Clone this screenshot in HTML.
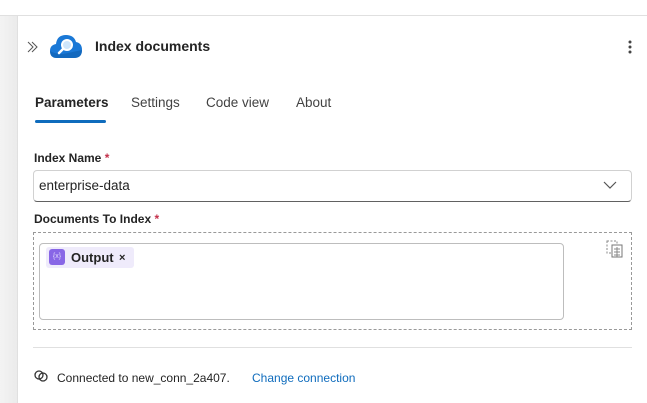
<!DOCTYPE html>
<html><head><style>
*{box-sizing:border-box;margin:0;padding:0}
body{width:647px;height:403px;overflow:hidden;background:#fff;font-family:"Liberation Sans",sans-serif;color:#242424;position:relative}
.strip{position:absolute;left:0;top:16px;width:18px;height:387px;background:linear-gradient(90deg,#f3f3f3,#ebebeb);border-right:1px solid #e0e0e0}
.topline{position:absolute;left:0;top:15px;width:647px;height:1px;background:#e0e0e0}
.abs{position:absolute}
.t{font-size:13.5px}
.req{color:#c4314b}
</style></head><body>
<div class="topline"></div>
<div class="strip"></div>
<svg class="abs" style="left:27px;top:41px" width="12" height="12"><path d="M1 1 L6 6 L1 11 M5 1 L10 6 L5 11" fill="none" stroke="#555" stroke-width="1"/></svg>
<svg class="abs" style="left:49px;top:32px" width="34" height="28" viewBox="0 0 34 28">
<path d="M8 26 Q1 26 1 19 Q1 13 7 12 Q8 3 17 3 Q25 3 27 10 Q33 11 33 18 Q33 26 25 26 Z" fill="#1a78d6"/>
<path d="M8 26 Q1 26 1 19 Q6 22 14 22 L33 18 Q33 26 25 26Z" fill="#0f5fae" opacity=".6"/>
<circle cx="18" cy="13" r="5" fill="#cfe6fb" stroke="#fff" stroke-width="2"/>
<line x1="14" y1="17" x2="10" y2="21" stroke="#fff" stroke-width="2.5" stroke-linecap="round"/>
</svg>
<div class="abs" style="left:95px;top:38px;font-size:14px;font-weight:bold">Index documents</div>
<svg class="abs" style="left:627px;top:40px" width="6" height="16"><circle cx="3" cy="2" r="1.5" fill="#444"/><circle cx="3" cy="7" r="1.5" fill="#444"/><circle cx="3" cy="12" r="1.5" fill="#444"/></svg>
<div class="abs t" style="left:35px;top:95px;font-weight:bold">Parameters</div>
<div class="abs" style="left:35px;top:120px;width:71px;height:3px;background:#0f6cbd;border-radius:2px"></div>
<div class="abs t" style="left:131px;top:95px;color:#424242">Settings</div>
<div class="abs t" style="left:206px;top:95px;color:#424242">Code view</div>
<div class="abs t" style="left:296px;top:95px;color:#424242">About</div>
<div class="abs" style="left:34px;top:151px;font-size:12px;font-weight:bold">Index Name <span class="req">*</span></div>
<div class="abs" style="left:33px;top:170px;width:599px;height:32px;border:1px solid #d1d1d1;border-bottom:1px solid #616161;border-radius:4px"></div>
<div class="abs t" style="left:39px;top:178px">enterprise-data</div>
<svg class="abs" style="left:603px;top:181px" width="14" height="9"><path d="M1 1 L7 7 L13 1" fill="none" stroke="#555" stroke-width="1.2"/></svg>
<div class="abs" style="left:34px;top:212px;font-size:12px;font-weight:bold">Documents To Index <span class="req">*</span></div>
<div class="abs" style="left:33px;top:232px;width:599px;height:98px;border:1px dashed #999"></div>
<div class="abs" style="left:39px;top:243px;width:525px;height:77px;border:1px solid #bdbdbd;border-radius:4px"></div>
<div class="abs" style="left:46px;top:247px;width:88px;height:21px;background:#efebfb;border-radius:3px"></div>
<div class="abs" style="left:49px;top:249px;width:16px;height:16px;background:#8866e6;border-radius:3px;color:#e0d8fb;font-size:7px;text-align:center;line-height:16px">{x}</div>
<div class="abs" style="left:71px;top:250px;font-size:13px;font-weight:bold">Output</div>
<div class="abs" style="left:119px;top:252px;font-size:11px;font-weight:bold">×</div>
<svg class="abs" style="left:606px;top:240px" width="18" height="18"><rect x="1" y="1" width="10" height="12" fill="none" stroke="#888" stroke-dasharray="2 1.5"/><rect x="6" y="5" width="10" height="12" fill="#fff" stroke="#777"/><path d="M8 9h6M8 12h6M8 15h6M11 7v10" stroke="#888"/></svg>
<div class="abs" style="left:33px;top:347px;width:599px;height:1px;background:#e0e0e0"></div>
<svg class="abs" style="left:33px;top:369px" width="16" height="14"><circle cx="6" cy="6" r="4" fill="none" stroke="#333" stroke-width="1.3"/><circle cx="10" cy="8" r="4" fill="none" stroke="#333" stroke-width="1.3"/></svg>
<div class="abs" style="left:57px;top:371px;font-size:12px">Connected to new_conn_2a407.</div>
<div class="abs" style="left:252px;top:371px;font-size:12px;color:#0f6cbd">Change connection</div>
</body></html>
